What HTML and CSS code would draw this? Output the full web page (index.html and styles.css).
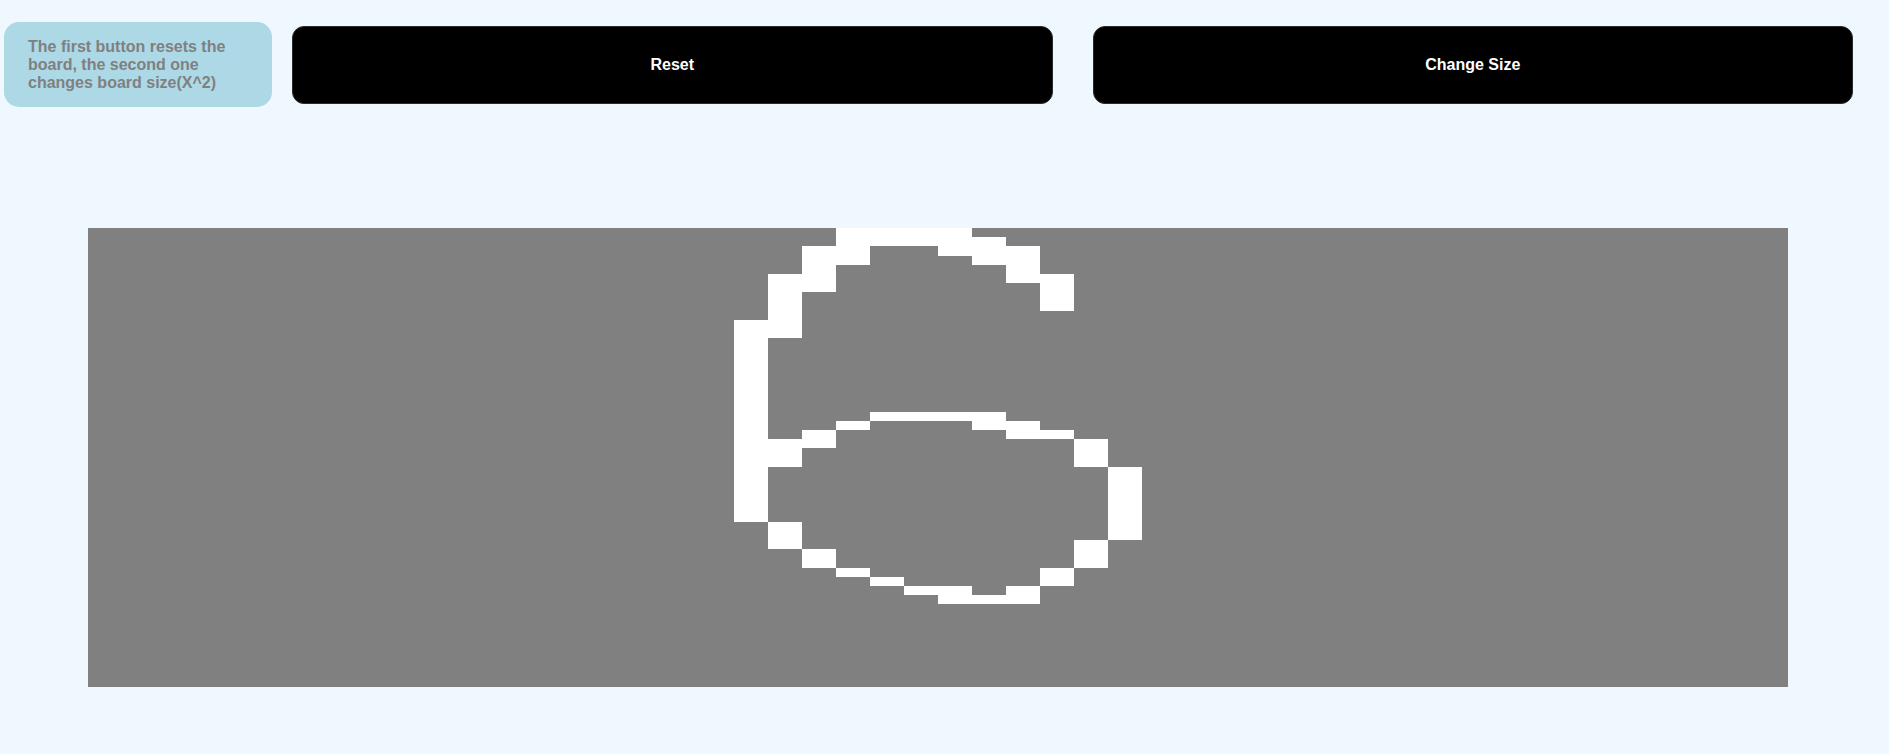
FILE: index.html
```html
<!DOCTYPE html>
<html lang="en">
<head>
<meta charset="utf-8">
<title>Drawing Board</title>
<link rel="stylesheet" href="styles.css">
</head>
<body>
  <header class="toolbar">
    <p class="hint">The first button resets the board, the second one changes board size(X^2)</p>
    <button class="btn" type="button">Reset</button>
    <button class="btn" type="button">Change Size</button>
  </header>
  <main class="board" id="board"></main>
  <script src="script.js"></script>
</body>
</html>
```

FILE: styles.css
```css
* {
  box-sizing: border-box;
}

html,
body {
  margin: 0;
  background: #f0f8ff;
  font-family: "Liberation Sans", Arial, sans-serif;
}

.toolbar {
  display: flex;
  align-items: center;
  padding: 22px 16px 0 4px;
}

.hint {
  flex: 0 0 268px;
  margin: 0;
  padding: 15.5px 24px;
  background: #add8e6;
  border-radius: 15px;
  color: #808080;
  font-weight: bold;
  font-size: 16px;
  line-height: normal;
}

.btn {
  flex: 1 1 0;
  height: 78px;
  margin: 0 20px;
  background: #000;
  color: #fff;
  border: 1px solid #2a2a2a;
  border-radius: 12px;
  font-family: "Liberation Sans", Arial, sans-serif;
  font-weight: bold;
  font-size: 16px;
}

.board {
  display: grid;
  grid-template-columns: repeat(50, 1fr);
  grid-template-rows: repeat(50, 1fr);
  width: 1700px;
  height: 459px;
  margin: 121px 0 0 88px;
  background: #808080;
}

.cell {
  background: #808080;
}

.cell.on {
  background: #fff;
}
```

FILE: script.js
```js
const SIZE = 50;
const drawn = {
  0: [22, 23, 24, 25],
  1: [22, 23, 24, 25, 26],
  2: [21, 22, 25, 26, 27],
  3: [21, 22, 26, 27],
  4: [21, 27],
  5: [20, 21, 27, 28],
  6: [20, 21, 28],
  7: [20, 28],
  8: [20, 28],
  9: [20],
  10: [19, 20],
  11: [19, 20],
  12: [19], 13: [19], 14: [19], 15: [19], 16: [19], 17: [19], 18: [19], 19: [19],
  20: [19, 23, 24, 25, 26],
  21: [19, 22, 26, 27],
  22: [19, 21, 27, 28],
  23: [19, 20, 21, 29],
  24: [19, 20, 29],
  25: [19, 20, 29],
  26: [19, 30], 27: [19, 30], 28: [19, 30], 29: [19, 30], 30: [19, 30], 31: [19, 30],
  32: [20, 30],
  33: [20, 30],
  34: [20, 29],
  35: [21, 29],
  36: [21, 29],
  37: [22, 28],
  38: [23, 28],
  39: [24, 25, 27],
  40: [25, 26, 27]
};

const board = document.getElementById('board');
const frag = document.createDocumentFragment();
for (let r = 0; r < SIZE; r++) {
  const row = drawn[r] || [];
  for (let c = 0; c < SIZE; c++) {
    const cell = document.createElement('div');
    cell.className = row.includes(c) ? 'cell on' : 'cell';
    frag.appendChild(cell);
  }
}
board.appendChild(frag);
```
